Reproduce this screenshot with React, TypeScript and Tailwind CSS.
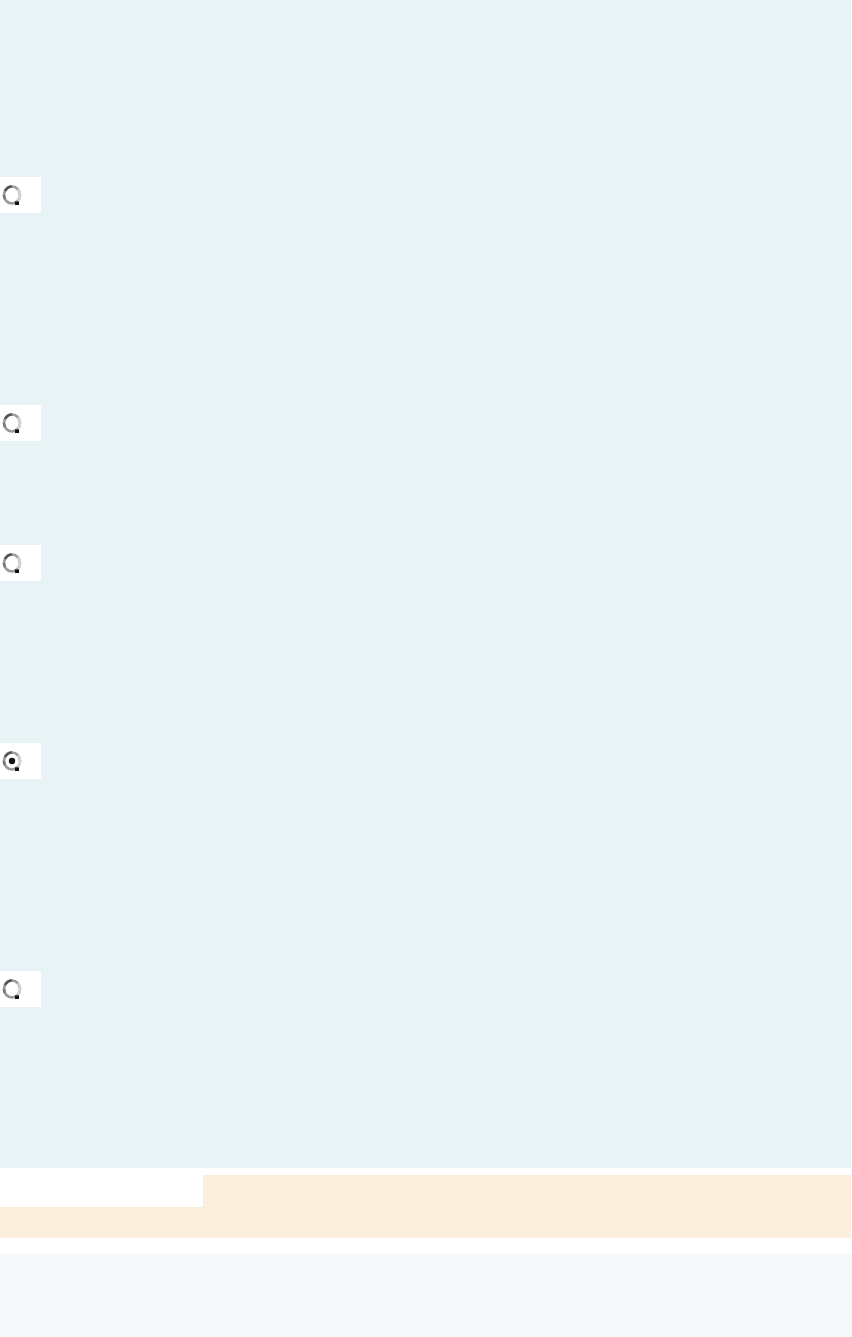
import React from 'react';

const Radio: React.FC<{ checked?: boolean }> = ({ checked }) => (
  <div className="w-[41px] h-[36px] bg-white flex items-center pl-[2px]">
    <svg width="20" height="22" viewBox="0 0 20 22">
      <ellipse cx="10" cy="11" rx="8" ry="8.5" fill="#ffffff" stroke="#9a9a9a" strokeWidth="2.6" />
      <path d="M3 7 A8 8.5 0 0 1 10 2.5" stroke="#555" strokeWidth="2.6" fill="none" />
      <path d="M3 15 A8 8.5 0 0 1 2 11" stroke="#777" strokeWidth="2.6" fill="none" />
      <path d="M16 5 A8 8.5 0 0 1 18 11 A8 8.5 0 0 1 16 17" stroke="#d4d4d4" strokeWidth="2.6" fill="none" />
      <rect x="13" y="17.5" width="4" height="3.5" fill="#111" />
      {checked && <circle cx="10" cy="11" r="3.2" fill="#111" />}
    </svg>
  </div>
);

export default function App() {
  return (
    <div className="w-[852px] min-h-[1337px] bg-white font-['Liberation_Sans',sans-serif]">
      <div className="w-[851px] h-[1168px] bg-[#e7f3f4] flex flex-col pt-[177px]">
        <Radio />
        <div className="mt-[192px]">
          <Radio />
        </div>
        <div className="mt-[104px]">
          <Radio />
        </div>
        <div className="mt-[162px]">
          <Radio checked />
        </div>
        <div className="mt-[192px]">
          <Radio />
        </div>
      </div>
      <div className="h-[7px]" />
      <div className="flex w-[852px]">
        <div className="w-[203px] flex flex-col">
          <div className="h-[32px] bg-white" />
          <div className="h-[31px] bg-[#fbeedd]" />
        </div>
        <div className="flex-1 h-[63px] bg-[#fbeedd] mr-px" />
      </div>
      <div className="h-[16px]" />
      <div className="h-[83px] bg-[#f7f8f9]" />
    </div>
  );
}
